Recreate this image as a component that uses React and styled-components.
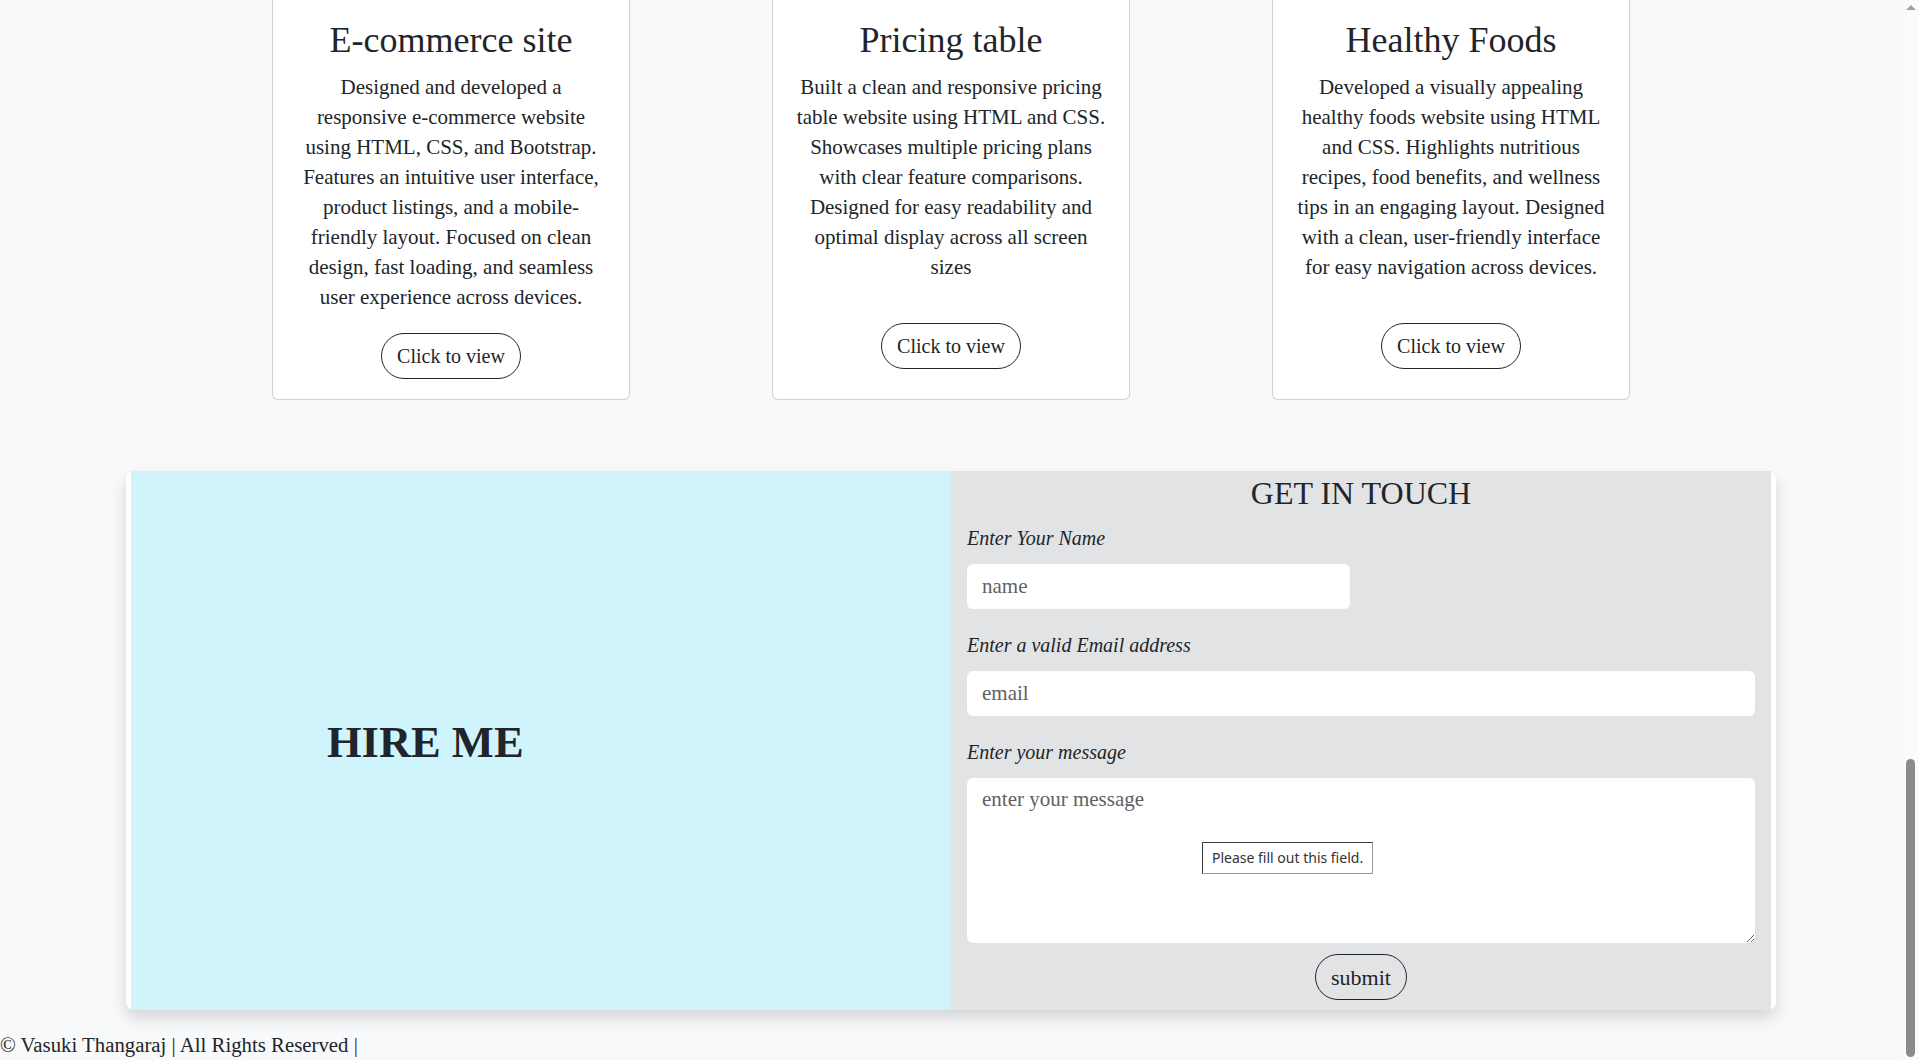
import React from "react";
import styled, { createGlobalStyle } from "styled-components";

const GlobalStyle = createGlobalStyle`
  *, *::before, *::after { box-sizing: border-box; }
  html, body { margin: 0; padding: 0; height: 100%; overflow: hidden; }
  body {
    background: #f8f9fa;
    color: #212529;
    font-family: "Liberation Serif", "Times New Roman", serif;
  }
  #root { height: 100%; }
`;

const Viewport = styled.div`
  display: flex;
  width: 100%;
  height: 100vh;
  overflow: hidden;
`;

const Page = styled.main`
  flex: 1;
  min-width: 0;
  display: flex;
  flex-direction: column;
  justify-content: flex-end;
  overflow: hidden;
`;

const Projects = styled.section`
  flex-shrink: 0;
  display: grid;
  grid-template-columns: repeat(3, 358px);
  column-gap: 142px;
  justify-content: center;
  margin-bottom: 71px;
`;

const Card = styled.article`
  background: #fff;
  border: 1px solid rgba(0, 0, 0, 0.175);
  border-radius: 6px;
  padding: 24px 24px 20px;
  display: flex;
  flex-direction: column;
  align-items: center;
  text-align: center;
`;

const CardTitle = styled.h2`
  margin: 0 0 9.5px;
  font-size: 36px;
  font-weight: 400;
  line-height: 1.2;
`;

const CardText = styled.p`
  margin: 0 0 ${(p) => p.$gap}px;
  font-size: 21px;
  line-height: 30px;
  white-space: nowrap;
`;

const PillButton = styled.button`
  font-family: inherit;
  font-size: 20px;
  line-height: 30px;
  padding: 7px 15.5px;
  border: 1px solid #212529;
  border-radius: 999px;
  background: transparent;
  color: #212529;
  cursor: pointer;
`;

const Contact = styled.section`
  flex-shrink: 0;
  margin: 0 126px;
  padding: 0 5px;
  background: #fff;
  border-radius: 8px;
  box-shadow: 0 0.5rem 1rem rgba(0, 0, 0, 0.15);
  display: grid;
  grid-template-columns: 1fr 1fr;
`;

const HireCol = styled.div`
  background: #cff4fc;
  display: flex;
  align-items: center;
  padding-left: 196px;
`;

const HireTitle = styled.h1`
  margin: 4px 0 0;
  font-size: 44.5px;
  font-weight: 700;
  line-height: 1.2;
`;

const FormCol = styled.form`
  background: #e2e3e5;
  padding: 3px 16px 10px;
  display: flex;
  flex-direction: column;
`;

const FormTitle = styled.h2`
  margin: 0 0 11px;
  text-align: center;
  font-size: 32px;
  font-weight: 400;
  line-height: 38.4px;
`;

const Label = styled.label`
  display: block;
  font-style: italic;
  font-size: 20px;
  line-height: 30px;
  margin-bottom: 11px;
`;

const Field = styled.input`
  display: block;
  width: ${(p) => p.$width || "100%"};
  height: 44.5px;
  margin: 0 0 21.5px;
  padding: 0 15px;
  border: none;
  border-radius: 6px;
  background: #fff;
  font-family: inherit;
  font-size: 21px;
  color: #212529;
  outline: none;
  &::placeholder { color: #5f6265; }
`;

const MessageWrap = styled.div`
  position: relative;
  margin-bottom: 11px;
`;

const Message = styled.textarea`
  display: block;
  width: 100%;
  height: 165px;
  padding: 6px 15px;
  border: none;
  border-radius: 6px;
  background: #fff;
  font-family: inherit;
  font-size: 21px;
  line-height: 31.5px;
  color: #212529;
  resize: vertical;
  outline: none;
  &::placeholder { color: #5f6265; }
`;

const Tooltip = styled.div`
  position: absolute;
  left: 235px;
  top: 64px;
  height: 32px;
  padding: 0 9px;
  background: #fff;
  border: 1px solid #9a9a9a;
  border-top-color: #3a3a3a;
  border-left-color: #3a3a3a;
  font-family: "Noto Sans", "Liberation Sans", sans-serif;
  font-size: 14px;
  line-height: 30px;
  color: #333;
  white-space: nowrap;
`;

const SubmitButton = styled(PillButton)`
  align-self: center;
  font-size: 22px;
  line-height: 29px;
  padding: 7.5px 15px;
`;

const Footer = styled.footer`
  flex-shrink: 0;
  margin-top: 20px;
  font-size: 20.8px;
  line-height: 30px;
`;

const ScrollTrack = styled.div`
  width: 17px;
  flex-shrink: 0;
  background: #fbfbfb;
  display: flex;
  flex-direction: column;
  align-items: center;
`;

const ScrollArrow = styled.div`
  margin-top: 5px;
  width: 0;
  height: 0;
  border-left: 5px solid transparent;
  border-right: 5px solid transparent;
  border-bottom: 5px solid #a3a3a3;
`;

const ScrollThumb = styled.div`
  margin-top: auto;
  margin-bottom: 3px;
  width: 9px;
  height: 298px;
  border-radius: 5px;
  background: #8b8b8b;
`;

const projects = [
  {
    title: "E-commerce site",
    gap: 21,
    lines: [
      "Designed and developed a",
      "responsive e-commerce website",
      "using HTML, CSS, and Bootstrap.",
      "Features an intuitive user interface,",
      "product listings, and a mobile-",
      "friendly layout. Focused on clean",
      "design, fast loading, and seamless",
      "user experience across devices.",
    ],
  },
  {
    title: "Pricing table",
    gap: 41,
    lines: [
      "Built a clean and responsive pricing",
      "table website using HTML and CSS.",
      "Showcases multiple pricing plans",
      "with clear feature comparisons.",
      "Designed for easy readability and",
      "optimal display across all screen",
      "sizes",
    ],
  },
  {
    title: "Healthy Foods",
    gap: 41,
    lines: [
      "Developed a visually appealing",
      "healthy foods website using HTML",
      "and CSS. Highlights nutritious",
      "recipes, food benefits, and wellness",
      "tips in an engaging layout. Designed",
      "with a clean, user-friendly interface",
      "for easy navigation across devices.",
    ],
  },
];

export default function App() {
  return (
    <>
      <GlobalStyle />
      <Viewport>
        <Page>
          <Projects>
            {projects.map((p) => (
              <Card key={p.title}>
                <CardTitle>{p.title}</CardTitle>
                <CardText $gap={p.gap}>
                  {p.lines.map((l, i) => (
                    <React.Fragment key={i}>
                      {l}
                      {i < p.lines.length - 1 && <br />}
                    </React.Fragment>
                  ))}
                </CardText>
                <PillButton type="button">Click to view</PillButton>
              </Card>
            ))}
          </Projects>

          <Contact>
            <HireCol>
              <HireTitle>HIRE ME</HireTitle>
            </HireCol>
            <FormCol onSubmit={(e) => e.preventDefault()}>
              <FormTitle>GET IN TOUCH</FormTitle>
              <Label htmlFor="name">Enter Your Name</Label>
              <Field id="name" type="text" placeholder="name" $width="383px" />
              <Label htmlFor="email">Enter a valid Email address</Label>
              <Field id="email" type="email" placeholder="email" />
              <Label htmlFor="message">Enter your message</Label>
              <MessageWrap>
                <Message id="message" placeholder="enter your message" />
                <Tooltip>Please fill out this field.</Tooltip>
              </MessageWrap>
              <SubmitButton type="submit">submit</SubmitButton>
            </FormCol>
          </Contact>

          <Footer>© Vasuki Thangaraj | All Rights Reserved |</Footer>
        </Page>
        <ScrollTrack>
          <ScrollArrow />
          <ScrollThumb />
        </ScrollTrack>
      </Viewport>
    </>
  );
}
